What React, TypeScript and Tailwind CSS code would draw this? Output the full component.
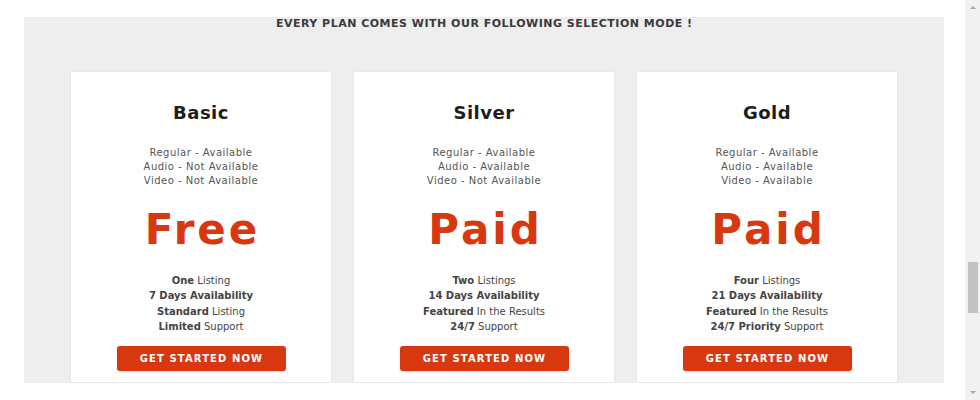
import React from 'react'

// each perk line: [bold part, regular part]
interface Plan {
  name: string
  modes: string[]
  price: string
  perks: [string, string][]
}

const plans: Plan[] = [
  {
    name: 'Basic',
    modes: ['Regular - Available', 'Audio - Not Available', 'Video - Not Available'],
    price: 'Free',
    perks: [
      ['One', ' Listing'],
      ['7 Days Availability', ''],
      ['Standard', ' Listing'],
      ['Limited', ' Support'],
    ],
  },
  {
    name: 'Silver',
    modes: ['Regular - Available', 'Audio - Available', 'Video - Not Available'],
    price: 'Paid',
    perks: [
      ['Two', ' Listings'],
      ['14 Days Availability', ''],
      ['Featured', ' In the Results'],
      ['24/7', ' Support'],
    ],
  },
  {
    name: 'Gold',
    modes: ['Regular - Available', 'Audio - Available', 'Video - Available'],
    price: 'Paid',
    perks: [
      ['Four', ' Listings'],
      ['21 Days Availability', ''],
      ['Featured', ' In the Results'],
      ['24/7 Priority', ' Support'],
    ],
  },
]

function PlanCard({ plan }: { plan: Plan }) {
  return (
    <div className="w-[260px] h-[310px] bg-white shadow-[0_0_3px_rgba(0,0,0,0.06)] flex flex-col items-center pt-[30px]">
      <h3 className="text-[18px] leading-[22px] font-semibold text-[#1d1d1d] tracking-[0.5px]">{plan.name}</h3>

      <div className="mt-[22px] flex flex-col items-center text-[10px] leading-[14px] text-[#555] tracking-[0.5px]">
        {plan.modes.map((m) => (
          <div key={m}>{m}</div>
        ))}
      </div>

      <div className="mt-[20px] pl-[3px] text-[42px] leading-[44px] font-bold text-[#d8380f] tracking-[3px]">{plan.price}</div>

      <ul className="mt-[21px] flex flex-col items-center text-[10px] leading-[15.3px] text-[#444]">
        {plan.perks.map(([b, r]) => (
          <li key={b}>
            <span className="font-bold">{b}</span>
            {r}
          </li>
        ))}
      </ul>

      <button className="mt-[12px] w-[169px] h-[25px] rounded-[3px] bg-[#d8380f] text-white text-[10px] font-bold tracking-[1.1px] pl-[1px] shadow-[0_1px_2px_rgba(0,0,0,0.15)]">
        GET STARTED NOW
      </button>
    </div>
  )
}

function Scrollbar() {
  return (
    <div className="w-[15px] h-full bg-[#f1f1f1] flex flex-col">
      <div className="h-[15px] flex items-center justify-center">
        <div className="w-0 h-0 border-l-[3px] border-r-[3px] border-b-[3px] border-l-transparent border-r-transparent border-b-[#a3a3a3]" />
      </div>
      <div className="flex-1">
        <div className="ml-[3px] mt-[247px] w-[10px] h-[51px] bg-[#c1c1c1]" />
      </div>
      <div className="h-[15px] flex items-center justify-center">
        <div className="w-0 h-0 border-l-[3px] border-r-[3px] border-t-[3px] border-l-transparent border-r-transparent border-t-[#a3a3a3]" />
      </div>
    </div>
  )
}

export default function App() {
  return (
    <div className="w-[980px] h-[400px] bg-white flex overflow-hidden font-['DejaVu_Sans',sans-serif]">
      <div className="flex-1 pt-[17px]">
        <section className="ml-[24px] w-[920px] h-[366px] bg-[#eeeeee] flex flex-col items-center">
          <h2 className="mt-[1px] pl-[0.5px] text-[11px] leading-[12px] font-bold text-[#3a3a3a] tracking-[0.5px]">
            EVERY PLAN COMES WITH OUR FOLLOWING SELECTION MODE !
          </h2>
          <div className="mt-[42px] flex gap-[23px]">
            {plans.map((p) => (
              <PlanCard key={p.name} plan={p} />
            ))}
          </div>
        </section>
      </div>
      <Scrollbar />
    </div>
  )
}
